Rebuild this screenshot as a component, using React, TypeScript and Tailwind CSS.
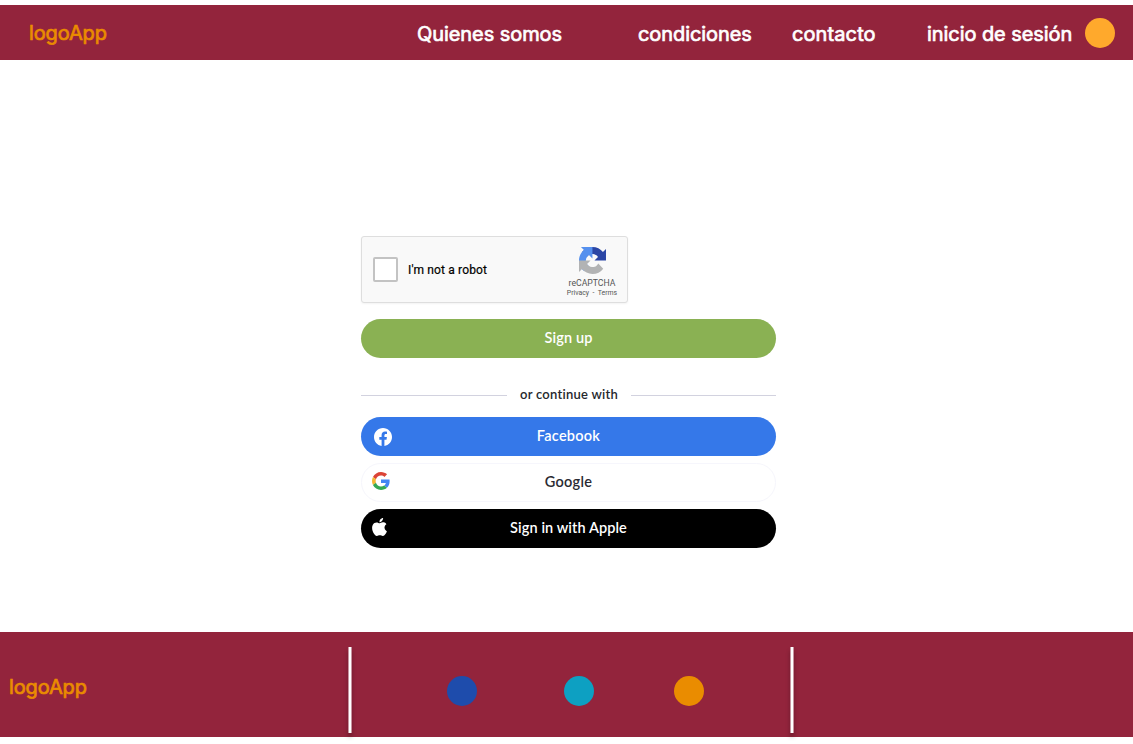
import React from "react";

type DotProps = { className: string };

const Dot = ({ className }: DotProps) => (
  <span className={`block size-[30px] shrink-0 rounded-full ${className}`} />
);

const FacebookIcon = () => (
  <svg className="size-[18px]" viewBox="0 0 24 24" fill="#fff">
    <path d="M24 12.07C24 5.4 18.63 0 12 0S0 5.4 0 12.07c0 6.03 4.39 11.02 10.13 11.93v-8.44H7.08v-3.49h3.05V9.41c0-3.02 1.79-4.69 4.53-4.69 1.31 0 2.68.24 2.68.24v2.97h-1.51c-1.49 0-1.96.93-1.96 1.89v2.25h3.33l-.53 3.49h-2.8V24C19.61 23.09 24 18.1 24 12.07z" />
  </svg>
);

const GoogleIcon = () => (
  <svg className="size-[18px]" viewBox="0 0 48 48">
    <path fill="#db4437" d="M24 9.5c3.54 0 6.71 1.22 9.21 3.6l6.85-6.85C35.9 2.38 30.47 0 24 0 14.62 0 6.51 5.38 2.56 13.22l7.98 6.19C12.43 13.72 17.74 9.5 24 9.5z" />
    <path fill="#4285f4" d="M46.98 24.55c0-1.57-.15-3.09-.38-4.55H24v9.02h12.94c-.58 2.96-2.26 5.48-4.78 7.18l7.73 6c4.51-4.18 7.09-10.36 7.09-17.65z" />
    <path fill="#f4b732" d="M10.53 28.59c-.48-1.45-.76-2.99-.76-4.59s.27-3.14.76-4.59l-7.98-6.19C.92 16.46 0 20.12 0 24s.92 7.54 2.56 10.78l7.97-6.19z" />
    <path fill="#34a853" d="M24 48c6.48 0 11.93-2.13 15.89-5.81l-7.73-6c-2.15 1.45-4.92 2.3-8.16 2.3-6.26 0-11.57-4.22-13.47-9.91l-7.98 6.19C6.51 42.62 14.62 48 24 48z" />
  </svg>
);

const AppleIcon = () => (
  <svg className="h-[18px] w-[15px]" viewBox="2.1 0 19.8 24" preserveAspectRatio="none" fill="#fff">
    <path d="M12.152 6.896c-.948 0-2.415-1.078-3.96-1.04-2.04.027-3.91 1.183-4.961 3.014-2.117 3.675-.546 9.103 1.519 12.09 1.013 1.454 2.208 3.09 3.792 3.039 1.52-.065 2.09-.987 3.935-.987 1.831 0 2.35.987 3.96.948 1.637-.026 2.676-1.48 3.676-2.948 1.156-1.688 1.636-3.325 1.662-3.415-.039-.013-3.182-1.221-3.22-4.857-.026-3.04 2.48-4.494 2.597-4.559-1.429-2.09-3.623-2.324-4.39-2.376-2-.156-3.675 1.09-4.61 1.09zM15.53 3.83c.843-1.012 1.4-2.427 1.245-3.83-1.207.052-2.662.805-3.532 1.818-.78.896-1.454 2.338-1.273 3.714 1.338.104 2.715-.688 3.559-1.701" />
  </svg>
);

const RecaptchaIcon = () => (
  <svg className="size-[27px]" viewBox="0 0 64 64">
    <path fill="#2b46a5" d="M64 31.955l-.033-1.37V4.687l-7.16 7.16C50.948 4.674 42.033.093 32.05.093c-10.4 0-19.622 4.96-25.458 12.64l11.736 11.86a15.55 15.55 0 0 1 4.754-5.334c2.05-1.6 4.952-2.906 8.968-2.906.485 0 .86.057 1.135.163 4.976.393 9.288 3.14 11.828 7.124l-8.307 8.307L64 31.953" />
    <path fill="#5590ee" d="M31.862.094l-1.37.033H4.594l7.16 7.16C4.58 13.147 0 22.06 0 32.046c0 10.4 4.96 19.622 12.64 25.458L24.5 45.768a15.55 15.55 0 0 1-5.334-4.754c-1.6-2.05-2.906-4.952-2.906-8.968 0-.485.057-.86.163-1.135.393-4.976 3.14-9.288 7.124-11.828l8.307 8.307L31.86.095" />
    <path fill="#b2b3b4" d="M.001 32.045l.033 1.37v25.898l7.16-7.16c5.86 7.173 14.774 11.754 24.76 11.754 10.4 0 19.622-4.96 25.458-12.64l-11.736-11.86a15.55 15.55 0 0 1-4.754 5.334c-2.05 1.6-4.952 2.906-8.968 2.906-.485 0-.86-.057-1.135-.163-4.976-.393-9.288-3.14-11.828-7.124l8.307-8.307c-10.522.04-22.4.066-27.295-.005" />
  </svg>
);

export default function App() {
  return (
    <div className="flex h-[744px] w-[1133px] flex-col overflow-hidden bg-white pt-[5px] font-['Inter',sans-serif]">
      <header className="flex h-[55px] shrink-0 items-center bg-[#93243c] pl-[29px] text-[20px] font-normal tracking-[-0.07px] text-white [-webkit-text-stroke:0.7px_currentColor]">
        <span className="w-[388px] tracking-[-0.13px] text-[#ea8c00]">logoApp</span>
        <nav className="flex pt-[3px] whitespace-nowrap">
          <a className="w-[221px]">Quienes somos</a>
          <a className="w-[154px]">condiciones</a>
          <a className="w-[135px] tracking-[0.1px]">contacto</a>
          <a className="w-[158px]">inicio de sesión</a>
        </nav>
        <Dot className="bg-[#ffa92c]" />
      </header>

      <main className="flex h-[572px] shrink-0 flex-col pt-[176px] pl-[361px] font-['Lato',sans-serif] text-[14.5px] font-semibold">
        <div className="flex h-[67px] w-[267px] items-center rounded-[3px] border-[1.5px] border-[#dedede] bg-[#f9f9f9] pl-[11px] font-['Roboto',sans-serif] text-black shadow-[0_1px_2px_#0000000d]">
          <span className="size-[25px] rounded-[2px] border-2 border-[#c3c3c3] bg-white" />
          <span className="ml-[10px] w-[155px] text-[12px] font-normal tracking-[0.15px] [-webkit-text-stroke:0.2px_currentColor]">I'm not a robot</span>
          <div className="flex w-[58px] flex-col items-center pt-[5px] font-normal text-[#555]">
            <RecaptchaIcon />
            <span className="mt-[3px] text-[8.7px] leading-[12px]">reCAPTCHA</span>
            <span className="text-[6.9px] leading-[9px] whitespace-nowrap">Privacy&nbsp; - &nbsp;Terms</span>
          </div>
        </div>

        <button className="mt-[16px] h-[39px] w-[415px] rounded-full bg-[#8ab153] pb-[2px] tracking-[0.15px] text-white">Sign up</button>

        <div className="mt-[27px] flex h-[20px] w-[415px] items-center justify-between text-[13px] tracking-[0.25px] text-[#25282d]">
          <span className="h-px w-[146px] bg-[#d2d2df]" />
          <span>or continue with</span>
          <span className="h-px w-[145px] bg-[#d2d2df]" />
        </div>

        <button className="mt-[12px] grid h-[39px] w-[415px] grid-cols-[40px_1fr_40px] items-center rounded-full bg-[#3578e9] tracking-[0.25px] text-white">
          <span className="pl-[13px]"><FacebookIcon /></span>
          <span className="-mt-[2px]">Facebook</span>
        </button>
        <button className="mt-[7px] grid h-[39px] w-[415px] grid-cols-[40px_1fr_40px] items-center rounded-full border-[1.5px] border-[#f6f6fc] bg-white tracking-[0.25px] text-[#2a2b33]">
          <span className="-mt-[3px] pl-[10px]"><GoogleIcon /></span>
          <span className="-mt-[2px]">Google</span>
        </button>
        <button className="mt-[7px] grid h-[39px] w-[415px] grid-cols-[40px_1fr_40px] items-center rounded-full bg-black tracking-[0.1px] text-white">
          <span className="-mt-[3px] pl-[11px]"><AppleIcon /></span>
          <span className="-mt-[2px]">Sign in with Apple</span>
        </button>
      </main>

      <footer className="flex h-[105px] shrink-0 bg-[#93243c]">
        <div className="w-[348px] pt-[40px] pl-[9px] text-[20px] font-normal tracking-[-0.13px] text-[#ea8c00] [-webkit-text-stroke:0.7px_currentColor]">logoApp</div>
        <div className="mt-[15px] h-[86px] w-[4px] border-x border-[#c794a0] bg-white shadow-[0_4px_4px_#00000040]" />
        <div className="flex w-[438px] pt-[44px] pl-[95px]">
          <Dot className="bg-[#1e4cac]" />
          <Dot className="ml-[87px] bg-[#0da0c2]" />
          <Dot className="ml-[80px] bg-[#ea8c00]" />
        </div>
        <div className="mt-[15px] h-[86px] w-[4px] border-x border-[#c794a0] bg-white shadow-[0_4px_4px_#00000040]" />
      </footer>
    </div>
  );
}
